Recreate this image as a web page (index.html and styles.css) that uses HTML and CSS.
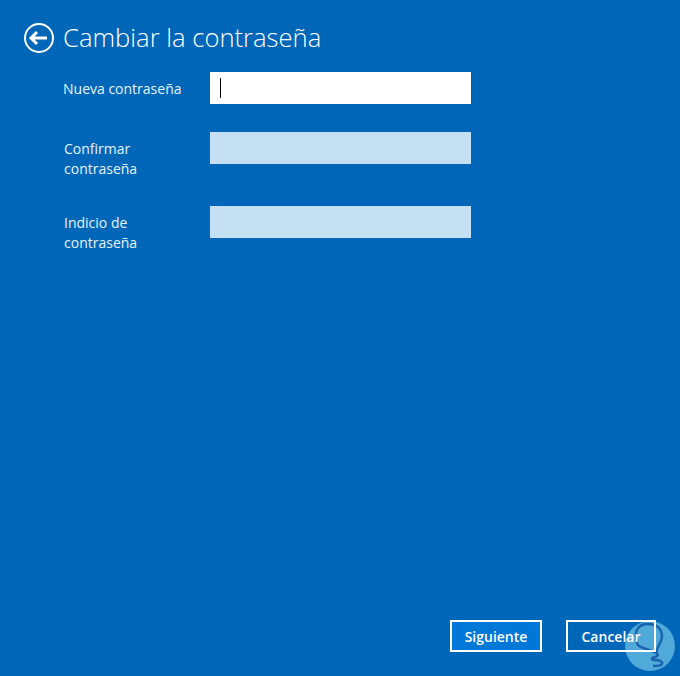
FILE: index.html
```html
<!DOCTYPE html>
<html lang="en">
<head>
    <meta charset="UTF-8" />
    <title>Cambiar la contraseña</title>
    <link rel="stylesheet" href="styles.css">
</head>
<body>
    <!-- Watermark, sits under the buttons -->
    <svg class="watermark" width="50" height="50" viewBox="0 0 50 50">
        <circle cx="25" cy="25" r="25" fill="#4fa9d9"/>
        <path d="M22 3C15 3 11 8 11 13C11 18 11 23 14 25C18 28 25 28 31 32C32 27 34 24 36 20C38 15 37 9 33 6C30 3 26 3 22 3ZM31 32C34 33 33 35 30 36C26 37 26 39 30 39C35 39 38 41 37 43C36 45 32 45 28 45" fill="none" stroke="#1a62ad" stroke-width="2.4"/>
    </svg>

    <div class="page">
        <!-- Title bar -->
        <div class="title-row">
            <svg class="back-icon" width="32" height="32" viewBox="0 0 32 32">
                <circle cx="16" cy="16" r="14" fill="none" stroke="#fff" stroke-width="2"/>
                <path d="M8 16H24M14 10L8 16L14 22" fill="none" stroke="#fff" stroke-width="3"/>
            </svg>
            <h1>Cambiar la contraseña</h1>
        </div>

        <!-- Password form -->
        <div class="form">
            <div class="form-row first">
                <label class="nudge">Nueva contraseña</label>
                <div class="field active"><span class="caret"></span></div>
            </div>
            <div class="form-row">
                <label>Confirmar<br>contraseña</label>
                <div class="field"></div>
            </div>
            <div class="form-row">
                <label>Indicio de<br>contraseña</label>
                <div class="field"></div>
            </div>
        </div>

        <!-- Buttons -->
        <div class="button-container">
            <button class="primary">Siguiente</button>
            <button>Cancelar</button>
        </div>
    </div>
</body>
</html>
```

FILE: styles.css
```css
html, body {
    margin: 0;
    height: 100%;
}

body {
    background-color: #0067b8;
    color: #fff;
    font-family: "Open Sans", "Noto Sans", sans-serif;
    overflow: hidden;
    position: relative;
}

.page {
    position: relative;
    height: 676px;
    box-sizing: border-box;
    padding: 22px 24px 24px;
    display: flex;
    flex-direction: column;
}

/* Title */
.title-row {
    display: flex;
    align-items: center;
    gap: 8px;
    height: 32px;
}

.back-icon {
    flex: none;
    margin-left: -1px;
}

h1 {
    margin: 0;
    font-size: 25.6px;
    font-weight: 300;
    white-space: nowrap;
    position: relative;
    top: -1px;
}

/* Form */
.form {
    display: flex;
    flex-direction: column;
    gap: 28px;
    margin-top: 18px;
    padding-left: 40px;
}

.form-row {
    display: grid;
    grid-template-columns: 146px 261px;
    height: 46px;
    align-items: start;
}

.form-row.first {
    height: 32px;
}

label {
    font-size: 14px;
    line-height: 20px;
    padding-top: 7px;
    color: #e6f3fb;
}

label.nudge {
    margin-left: -1px;
    white-space: nowrap;
}

.field {
    height: 32px;
    background-color: #c4e0f2;
}

.field.active {
    background-color: #fff;
    display: flex;
    align-items: center;
    padding-left: 10px;
}

.caret {
    width: 1px;
    height: 20px;
    background-color: #000;
}

/* Buttons */
.button-container {
    margin-top: auto;
    display: flex;
    justify-content: flex-end;
    gap: 24px;
}

button {
    width: 92px;
    height: 32px;
    box-sizing: border-box;
    background-color: transparent;
    border: 2px solid #fff;
    color: #fff;
    font-family: inherit;
    font-size: 14px;
    font-weight: 600;
    padding: 0;
}

button:last-child {
    width: 90px;
}

button.primary {
    background-color: #0078d7;
}

.watermark {
    position: absolute;
    left: 625px;
    top: 621px;
}
```
